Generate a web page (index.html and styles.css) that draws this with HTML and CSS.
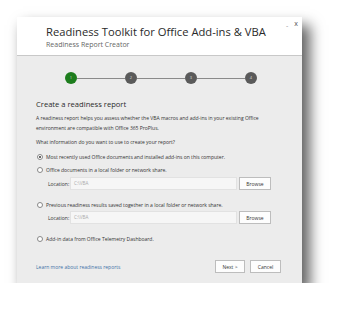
FILE: index.html
```html
<!DOCTYPE html>
<html lang="en">
<head>
  <meta charset="UTF-8" />
  <meta name="viewport" content="width=device-width, initial-scale=1" />
  <title>Readiness Report Creator</title>
  <link rel="stylesheet" href="styles.css">
</head>
<body>
  <div class="dialog">
    <div class="header">
      <div class="win-btns"><span class="min">-</span><span class="close">x</span></div>
      <h1>Readiness Toolkit for Office Add-ins &amp; VBA</h1>
      <div class="subtitle">Readiness Report Creator</div>
    </div>

    <div class="content">
      <div class="steps">
        <span class="step active">1</span>
        <span class="line"></span>
        <span class="step">2</span>
        <span class="line"></span>
        <span class="step">3</span>
        <span class="line"></span>
        <span class="step">4</span>
      </div>

      <h2>Create a readiness report</h2>
      <p class="intro">A readiness report helps you assess whether the VBA macros and add-ins in your existing Office environment are compatible with Office 365 ProPlus.</p>
      <p class="question">What information do you want to use to create your report?</p>

      <div class="option opt-first"><span class="radio checked"></span>Most recently used Office documents and installed add-ins on this computer.</div>

      <div class="option opt-second"><span class="radio"></span>Office documents in a local folder or network share.</div>
      <div class="location">
        <span class="loc-label">Location:</span>
        <div class="loc-input">C:\VBA</div>
        <button class="btn browse">Browse</button>
      </div>

      <div class="option opt-third"><span class="radio"></span>Previous readiness results saved together in a local folder or network share.</div>
      <div class="location loc-second">
        <span class="loc-label">Location:</span>
        <div class="loc-input">C:\VBA</div>
        <button class="btn browse">Browse</button>
      </div>

      <div class="option opt-fourth"><span class="radio"></span>Add-in data from Office Telemetry Dashboard.</div>

      <div class="footer">
        <a class="learn" href="#">Learn more about readiness reports</a>
        <button class="btn next">Next &gt;</button>
        <button class="btn cancel">Cancel</button>
      </div>
    </div>
  </div>
</body>
</html>
```

FILE: styles.css
```css
body {
  margin: 0;
  background: #ffffff;
  font-family: "Open Sans", "Noto Sans", sans-serif;
  color: #333;
}
.dialog {
  margin: 17px 0 0 17px;
  width: 285px;
  background: #ececec;
  box-shadow: 7px 9px 13px 1px rgba(0,0,0,0.62);
}
.header {
  position: relative;
  height: 38px;
  background: #fff;
  border-bottom: 1px solid #c8c8c8;
  padding-left: 29px;
}
.win-btns {
  position: absolute;
  top: 2px;
  right: 4px;
  font-size: 7px;
  color: #555;
  display: flex;
  gap: 6px;
}
.win-btns .min {
  margin-top: 2px;
  color: #999;
}
h1 {
  margin: 0;
  padding-top: 7px;
  font-size: 11.2px;
  font-weight: normal;
  line-height: 16px;
  color: #2a2a2a;
}
.subtitle {
  font-size: 7px;
  line-height: 10px;
  color: #666;
}
.content {
  padding: 16px 21px 10px 19px;
}
.steps {
  display: flex;
  align-items: center;
  margin-left: 29px;
  width: 192px;
}
.step {
  width: 12px;
  height: 12px;
  border-radius: 50%;
  background: #5a5a5a;
  color: #ddd;
  font-size: 4px;
  line-height: 12px;
  text-align: center;
}
.step.active {
  background: #1d7d1d;
}
.line {
  flex: 1;
  height: 1px;
  background: #8a8a8a;
}
h2 {
  margin: 15px 0 0;
  font-size: 7.6px;
  font-weight: normal;
  line-height: 10px;
  color: #2a2a2a;
}
p {
  margin: 0;
  font-size: 5px;
  line-height: 10px;
}
.intro {
  margin-top: 4px;
  width: 236px;
}
.question {
  margin-top: 4px;
}
.option {
  display: flex;
  align-items: center;
  font-size: 5px;
  line-height: 10px;
}
.opt-first { margin-top: 5px; }
.opt-second { margin-top: 3px; }
.opt-third { margin-top: 10px; }
.opt-fourth { margin-top: 10px; }
.radio {
  width: 4px;
  height: 4px;
  border: 0.6px solid #888;
  border-radius: 50%;
  background: #fff;
  margin: 0 3px 0 1px;
  box-sizing: content-box;
  position: relative;
}
.radio.checked::after {
  content: "";
  position: absolute;
  left: 1px;
  top: 1px;
  width: 2px;
  height: 2px;
  border-radius: 50%;
  background: #333;
}
.location {
  display: flex;
  align-items: center;
  margin: 2px 0 0 12px;
  height: 13px;
  font-size: 5px;
}
.loc-second {
  margin-top: 1px;
}
.loc-label {
  width: 22px;
}
.loc-input {
  width: 162px;
  height: 11px;
  line-height: 11px;
  padding-left: 3px;
  background: #f6f6f6;
  border: 1px solid #e2e2e2;
  color: #aaa;
  font-size: 4.6px;
}
.btn {
  font-family: "Open Sans", "Noto Sans", sans-serif;
  font-size: 5px;
  color: #333;
  background: #fdfdfd;
  border: 1px solid #bdbdbd;
  padding: 0;
  height: 13px;
}
.browse {
  width: 32px;
  margin-left: 2px;
}
.footer {
  display: flex;
  align-items: center;
  margin-top: 16px;
}
.learn {
  flex: 1;
  font-size: 5px;
  color: #3f72a8;
  text-decoration: none;
}
.next {
  width: 30px;
}
.cancel {
  width: 31px;
  margin-left: 5px;
}
```
